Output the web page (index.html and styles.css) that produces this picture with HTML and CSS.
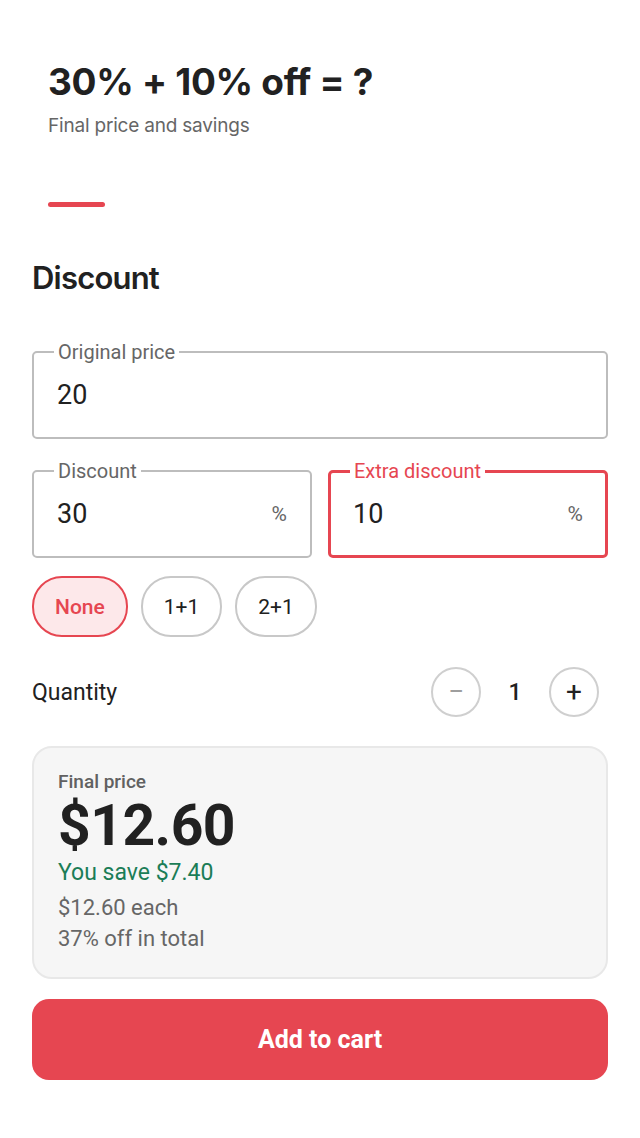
FILE: index.html
```html
<!DOCTYPE html>
<html>

<head>
  <meta charset="utf-8">
  <meta name="viewport" content="width=device-width">
  <title>Discount Calculator</title>

  <link rel="stylesheet" href="styles.css">
</head>

<body>
  <div class="app">

    <header class="header">
      <h1 class="header__title">30% + 10% off = ?</h1>
      <p class="header__subtitle">Final price and savings</p>
      <span class="header__bar"></span>
    </header>

    <h2 class="section-title">Discount</h2>

    <form class="form" id="discount-form">
      <fieldset class="field">
        <legend class="field__label">Original price</legend>
        <div class="field__body">
          <input class="field__input" id="price" type="text" value="20">
        </div>
      </fieldset>

      <div class="form__row">
        <fieldset class="field">
          <legend class="field__label">Discount</legend>
          <div class="field__body">
            <input class="field__input" id="discount" type="text" value="30">
            <span class="field__suffix">%</span>
          </div>
        </fieldset>

        <fieldset class="field field--active">
          <legend class="field__label">Extra discount</legend>
          <div class="field__body">
            <input class="field__input" id="extra" type="text" value="10">
            <span class="field__suffix">%</span>
          </div>
        </fieldset>
      </div>

      <div class="chips">
        <button class="chip chip--selected" type="button">None</button>
        <button class="chip" type="button">1+1</button>
        <button class="chip" type="button">2+1</button>
      </div>

      <div class="quantity">
        <span class="quantity__label">Quantity</span>
        <div class="stepper">
          <button class="stepper__button stepper__button--disabled" type="button">&minus;</button>
          <span class="stepper__value">1</span>
          <button class="stepper__button" type="button">+</button>
        </div>
      </div>

      <div class="result">
        <span class="result__caption">Final price</span>
        <span class="result__price">$12.60</span>
        <span class="result__save">You save $7.40</span>
        <span class="result__note">$12.60 each</span>
        <span class="result__note">37% off in total</span>
      </div>

      <button class="button" type="submit">Add to cart</button>
    </form>

  </div>
</body>

</html>
```

FILE: styles.css
```css
:root {
  --color-accent: #e64651;
  --color-accent-soft: #fde8ea;
  --color-border: #bdbdbd;
  --color-text: #212121;
  --color-muted: #666666;
  --color-green: #1b7d57;
}

* {
  box-sizing: border-box;
}

body {
  margin: 0;
  background-color: #fff;
}

.app {
  padding: 58px 32px 40px;
  font-family: Roboto, 'Noto Sans', Arial, sans-serif;
  color: var(--color-text);
}

.header {
  display: flex;
  flex-direction: column;
  padding: 0 16px;
  font-family: Inter, Roboto, Arial, sans-serif;
}

.header__title {
  margin: 0;
  font-size: 37px;
  font-weight: 700;
  line-height: 48px;
  letter-spacing: -0.3px;
}

.header__subtitle {
  margin: 8px 0 0;
  font-size: 19px;
  line-height: 24px;
  color: var(--color-muted);
  letter-spacing: -0.2px;
}

.header__bar {
  width: 57px;
  height: 5px;
  margin-top: 64px;
  border-radius: 3px;
  background-color: var(--color-accent);
}

.section-title {
  margin: 51px 0 42px;
  font-family: Inter, Roboto, Arial, sans-serif;
  font-size: 31px;
  font-weight: 600;
  line-height: 40px;
  letter-spacing: -0.8px;
}

.form {
  display: flex;
  flex-direction: column;
}

.form__row {
  display: grid;
  grid-template-columns: 1fr 1fr;
  gap: 16px;
  margin-top: 20px;
}

.field {
  margin: 0;
  min-width: 0;
  padding: 0 23px 11px 20px;
  border: 2px solid var(--color-border);
  border-radius: 5px;
}

.field__label {
  padding: 0 4px;
  font-size: 20px;
  line-height: 24px;
  color: var(--color-muted);
}

.field__body {
  display: flex;
  align-items: center;
  height: 62px;
}

.field__input {
  flex: 1;
  min-width: 0;
  padding: 0 0 0 3px;
  border: none;
  outline: none;
  background: transparent;
  font: inherit;
  font-size: 27px;
  color: var(--color-text);
}

.field__suffix {
  font-size: 21px;
  color: var(--color-muted);
}

.field--active {
  border: 3px solid var(--color-accent);
  padding-left: 19px;
  padding-right: 22px;
  padding-bottom: 10px;
}

.field--active .field__label {
  color: var(--color-accent);
}

.chips {
  display: flex;
  gap: 13px;
  margin-top: 18px;
}

.chip {
  height: 61px;
  padding: 0 21px;
  border: 2px solid #c8c8c8;
  border-radius: 30px;
  background-color: #fff;
  font: inherit;
  font-size: 21px;
  color: var(--color-text);
}

.chip--selected {
  border-color: var(--color-accent);
  background-color: var(--color-accent-soft);
  color: var(--color-accent);
  font-weight: 500;
}

.quantity {
  display: flex;
  align-items: center;
  justify-content: space-between;
  margin-top: 30px;
}

.quantity__label {
  font-size: 23px;
}

.stepper {
  display: flex;
  align-items: center;
  gap: 24px;
  padding-right: 9px;
}

.stepper__button {
  width: 50px;
  height: 50px;
  padding: 0;
  border: 2px solid #cfcfcf;
  border-radius: 50%;
  background-color: #fff;
  font: inherit;
  font-size: 28px;
  line-height: 1;
  color: var(--color-text);
}

.stepper__button--disabled {
  color: #9e9e9e;
}

.stepper__value {
  width: 20px;
  text-align: center;
  font-size: 23px;
  font-weight: 500;
}

.result {
  display: flex;
  flex-direction: column;
  margin-top: 29px;
  padding: 22px 24px 25px;
  border: 2px solid #e8e8e8;
  border-radius: 20px;
  background-color: #f6f6f6;
}

.result__caption {
  font-size: 19px;
  font-weight: 500;
  line-height: 24px;
  color: #616161;
}

.result__price {
  font-size: 57px;
  font-weight: 700;
  line-height: 64px;
  letter-spacing: -0.5px;
}

.result__save {
  font-size: 23px;
  line-height: 30px;
  color: var(--color-green);
}

.result__note {
  margin-top: 7px;
  font-size: 22px;
  line-height: 26px;
  color: var(--color-muted);
}

.result__note + .result__note {
  margin-top: 5px;
}

.button {
  height: 81px;
  margin-top: 20px;
  border: none;
  border-radius: 17px;
  background-color: var(--color-accent);
  font: inherit;
  font-size: 25px;
  font-weight: 700;
  color: #fff;
  cursor: pointer;
}
```
